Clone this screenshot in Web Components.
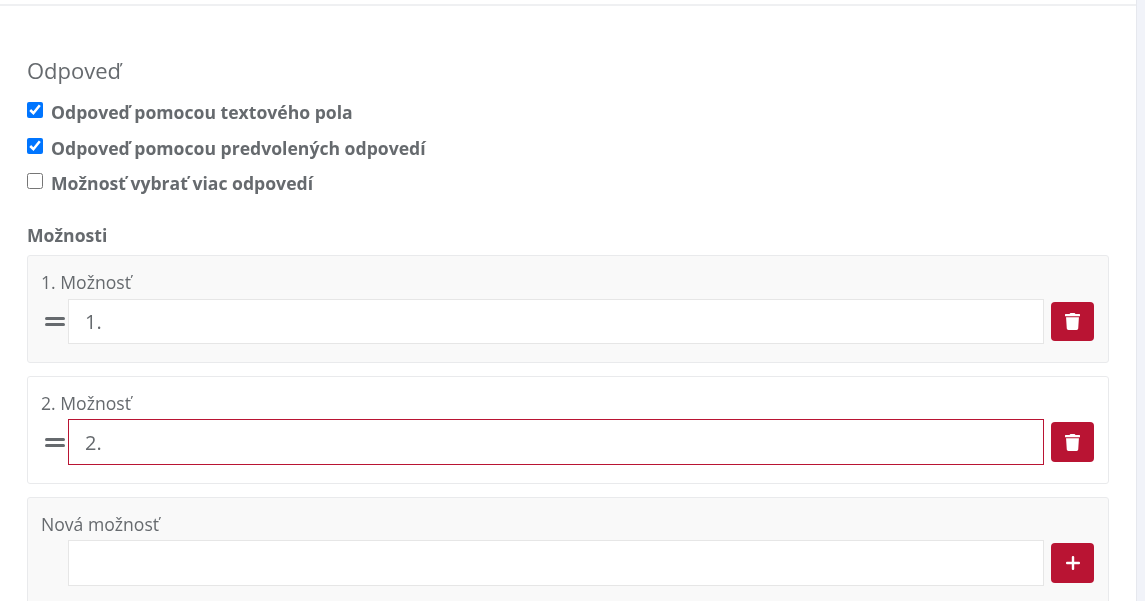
<!DOCTYPE html>
<html lang="sk">
<head>
<meta charset="utf-8">
<title>Odpoveď</title>
<style>
  html, body { margin: 0; height: 100%; overflow: hidden; background: #fff; }
  body { font-family: "Open Sans", "Liberation Sans", sans-serif; color: #666a6e; }
</style>
</head>
<body>
<answer-page>
  <check-row checked>Odpoveď pomocou textového pola</check-row>
  <check-row checked>Odpoveď pomocou predvolených odpovedí</check-row>
  <check-row>Možnosť vybrať viac odpovedí</check-row>
  <option-card slot="cards" label="1. Možnosť" value="1." handle tone="grey" action="delete"></option-card>
  <option-card slot="cards" label="2. Možnosť" value="2." handle tone="white" invalid action="delete"></option-card>
  <option-card slot="cards" label="Nová možnosť" value="" tone="grey" action="add"></option-card>
</answer-page>
<script>
class AnswerPage extends HTMLElement {
  connectedCallback() {
    this.attachShadow({ mode: 'open' });
    this.shadowRoot.innerHTML = `
      <style>
        :host { display: flex; height: 601px; overflow: hidden; }
        .main { flex: 1; min-width: 0; padding-top: 4px; }
        /* own layer without opaque backdrop: text comes out greyscale like the reference */
        .panel {
          border-top: 2px solid #eff0f2;
          padding: 50px 27px 0 27px;
          will-change: transform;
        }
        h2 {
          margin: 0 0 13px;
          font-size: 22px;
          font-weight: 400;
          line-height: 28px;
          padding-bottom: 2px;
        }
        .checks { display: flex; flex-direction: column; }
        h3 {
          margin: 16px 0 6.900px;
          font-size: 17.600px;
          font-weight: 700;
          line-height: 26.400px;
        }
        .cards { display: flex; flex-direction: column; gap: 12.600px; }
        .rail {
          width: 8px;
          background: #f1f3f9;
          border-left: 1px solid #e6e8ee;
        }
      </style>
      <div class="main">
        <div class="panel">
          <h2>Odpoveď</h2>
          <div class="checks"><slot></slot></div>
          <h3>Možnosti</h3>
          <div class="cards"><slot name="cards"></slot></div>
        </div>
      </div>
      <div class="rail"></div>
    `;
  }
}

class CheckRow extends HTMLElement {
  connectedCallback() {
    this.attachShadow({ mode: 'open' });
    this.shadowRoot.innerHTML = `
      <style>
        :host { display: block; height: 35.700px; }
        label { display: flex; align-items: flex-start; gap: 8px; }
        input { width: 16px; height: 16px; margin: 3px 0 0; accent-color: #0075ff; flex: none; }
        span { font-size: 17.600px; font-weight: 700; line-height: 26.400px; }
      </style>
      <label>
        <input type="checkbox" ${this.hasAttribute('checked') ? 'checked' : ''}>
        <span><slot></slot></span>
      </label>
    `;
  }
}

class OptionCard extends HTMLElement {
  connectedCallback() {
    const invalid = this.hasAttribute('invalid');
    const isAdd = this.getAttribute('action') === 'add';
    const trash = `<svg width="15" height="17" viewBox="0 0 448 512" preserveAspectRatio="none" fill="#fff"><path d="M432 32H312l-9.400-18.700A24 24 0 0 0 281.100 0H166.800a23.700 23.700 0 0 0-21.400 13.300L136 32H16A16 16 0 0 0 0 48v32a16 16 0 0 0 16 16h416a16 16 0 0 0 16-16V48a16 16 0 0 0-16-16zM53.200 467a48 48 0 0 0 47.900 45h245.800a48 48 0 0 0 47.900-45L416 128H32z"/></svg>`;
    const plus = `<svg width="14" height="14" viewBox="0 0 14 14" fill="#fff"><rect x="5.800" y="0" width="2.400" height="14" rx="1"/><rect x="0" y="5.800" width="14" height="2.400" rx="1"/></svg>`;
    const grip = `<svg width="20" height="9" viewBox="0 0 20 9" fill="#666a6e"><rect width="20" height="3" rx="1.500"/><rect y="6" width="20" height="3" rx="1.500"/></svg>`;
    this.attachShadow({ mode: 'open' });
    this.shadowRoot.innerHTML = `
      <style>
        :host { display: block; }
        .card {
          box-sizing: border-box;
          height: 108px;
          padding: 14px 14px 0 13px;
          border: 1px solid #e9eaec;
          border-radius: 3px;
          background: ${this.getAttribute('tone') === 'white' ? '#fff' : '#f9f9f9'};
        }
        .title { font-size: 17.600px; line-height: 24px; height: 28.400px; }
        .row { display: flex; align-items: center; }
        .grip { width: 27px; flex: none; display: flex; justify-content: center; }
        .grip svg { display: block; }
        input {
          box-sizing: border-box;
          flex: 1;
          min-width: 0;
          height: 45.600px;
          padding: 0 16px;
          border: 1px solid ${invalid ? '#b91433' : '#e6e6e6'};
          border-radius: 0;
          background: #fff;
          outline: none;
          font: 400 20px "Open Sans", "Liberation Sans", sans-serif;
          color: inherit;
        }
        button {
          width: 43px;
          height: 39.600px;
          margin-left: 7px;
          flex: none;
          display: flex;
          align-items: center;
          justify-content: center;
          padding: 0;
          border: 0;
          border-radius: 4px;
          background: #b91433;
        }
      </style>
      <div class="card">
        <div class="title">${this.getAttribute('label')}</div>
        <div class="row">
          <div class="grip">${this.hasAttribute('handle') ? grip : ''}</div>
          <input type="text" value="${this.getAttribute('value')}">
          <button type="button">${isAdd ? plus : trash}</button>
        </div>
      </div>
    `;
  }
}

customElements.define('answer-page', AnswerPage);
customElements.define('check-row', CheckRow);
customElements.define('option-card', OptionCard);
</script>
</body>
</html>
